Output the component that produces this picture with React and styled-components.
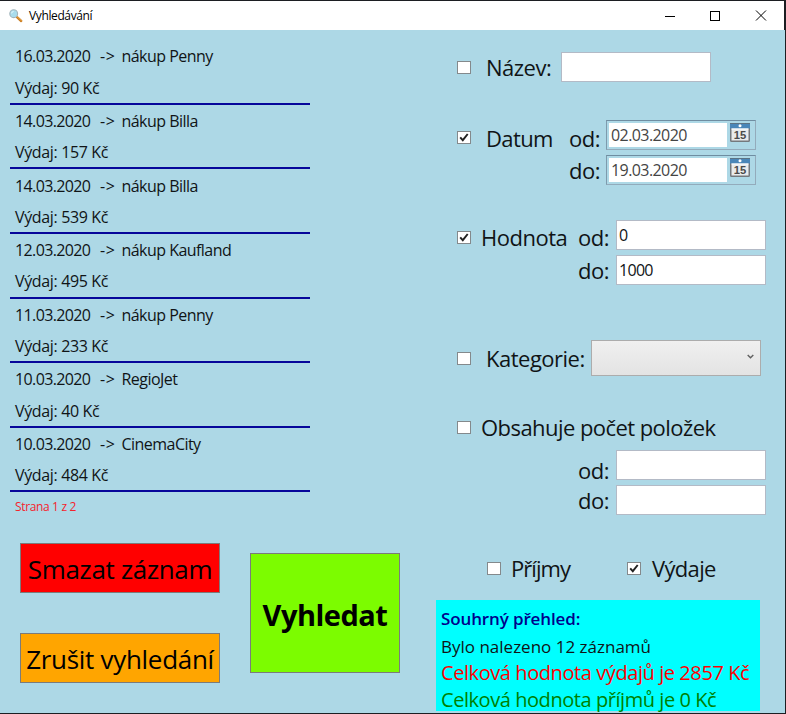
import React from "react";
import styled, { createGlobalStyle } from "styled-components";

const GlobalStyle = createGlobalStyle`
  *, *::before, *::after { box-sizing: border-box; }
  body {
    margin: 0;
    background: #1c1e22;
    font-family: "Open Sans", "Noto Sans", sans-serif;
    color: #101416;
  }
  button, input { font: inherit; color: inherit; border-radius: 0; }
`;

const Window = styled.div`
  width: 786px;
  height: 714px;
  padding: 1px 1px 1px 0;
  background: #1c1e22;
  overflow: hidden;
  display: flex;
  flex-direction: column;
`;

const TitleBar = styled.header`
  height: 29px;
  flex: none;
  width: 784px;
  background: #fff;
  display: flex;
  align-items: center;
  padding-left: 9px;
`;

const Title = styled.h1`
  margin: 0 auto 0 6px;
  font-size: 12px;
  font-weight: 400;
  line-height: 28px;
  letter-spacing: -0.38px;
  color: #000;
`;

const WindowButton = styled.button`
  width: ${(p) => p.$width || 46}px;
  height: 29px;
  padding: 0;
  border: 0;
  background: none;
  display: grid;
  place-items: center;
`;

const Content = styled.main`
  flex: 1;
  min-height: 0;
  background: #add8e6;
  display: flex;
`;

const LeftPane = styled.section`
  width: 436px;
  flex: none;
  padding: 10.3px 0 0 10px;
`;

const RecordList = styled.ul`
  list-style: none;
  margin: 0;
  padding: 0;
  width: 300px;
`;

const Record = styled.li`
  height: 64.6px;
  padding: 1.1px 0 0 5px;
  border-bottom: 2px solid #06069a;
  font-size: 16px;
  line-height: 31.2px;
  white-space: pre;
`;

const RecordTitle = styled.div`
  display: flex;
  letter-spacing: -0.54px;
`;

const RecordDate = styled.span`
  width: 85px;
  letter-spacing: -0.62px;
`;

const RecordArrow = styled.span`
  width: 21.5px;
  letter-spacing: 0.6px;
`;

const RecordAmount = styled.div`
  letter-spacing: -0.36px;
`;

const PageInfo = styled.p`
  margin: 5.2px 0 0 5px;
  font-size: 12px;
  line-height: 18px;
  letter-spacing: -0.35px;
  color: #f5222d;
`;

const Actions = styled.div`
  display: grid;
  grid-template-columns: 200px 150px;
  column-gap: 30px;
  margin: 27.3px 0 0 10px;
  align-items: center;
`;

const ActionStack = styled.div`
  display: grid;
  row-gap: 40px;
`;

const ActionButton = styled.button`
  height: ${(p) => p.$height || 50}px;
  padding: ${(p) => p.$nudge || 0}px 0 0;
  border: 1px solid #7b7b7b;
  background: ${(p) => p.$color};
  color: #000;
  font-size: ${(p) => p.$size || 26}px;
  font-weight: ${(p) => p.$weight || 400};
  letter-spacing: ${(p) => p.$tracking}px;
  white-space: nowrap;
`;

const RightPane = styled.section`
  flex: 1;
  padding-top: 22px;
`;

const Filters = styled.form`
  padding-left: 21px;
`;

const FilterRow = styled.div`
  display: flex;
  align-items: center;
  height: ${(p) => p.$height || 30}px;
  margin-top: ${(p) => p.$gap || 0}px;
  padding-left: ${(p) => p.$indent || 0}px;
`;

const CheckBox = styled.span`
  width: 14px;
  height: 13px;
  flex: none;
  margin-top: ${(p) => p.$drop || 1}px;
  margin-right: ${(p) => p.$space || 15}px;
  border: 1px solid #84898c;
  background: #fff;
  display: grid;
  place-items: center;
`;

const Caption = styled.label`
  flex: none;
  width: ${(p) => p.$width}px;
  padding-top: ${(p) => p.$drop || 0}px;
  font-size: 22px;
  line-height: 30px;
  letter-spacing: ${(p) => p.$tracking ?? -0.5}px;
  white-space: nowrap;
`;

const TextBox = styled.input`
  width: 150px;
  height: 30px;
  padding: 0 2px 0;
  border: 1px solid #b3bac6;
  background: #fff;
  font-size: 16px;
  letter-spacing: -0.7px;
  outline: 0;
`;

const DateBox = styled.div`
  width: 150px;
  height: 30px;
  border: 1px solid #93abbb;
  border-top-color: #6f8da1;
  border-left-color: #7e9aac;
  display: flex;
  padding: 2px 5px 2px 2px;
  justify-content: space-between;
`;

const DateValue = styled.span`
  width: 118px;
  height: 24px;
  padding-left: 2px;
  background: #fff;
  color: #444;
  font-size: 16px;
  line-height: 24px;
  letter-spacing: -0.58px;
`;

const Select = styled.div`
  width: 170px;
  height: 36px;
  padding: 0 6px 2px 0;
  border: 1px solid #acacac;
  background: linear-gradient(#f0f0f0, #e3e3e3);
  display: flex;
  align-items: center;
  justify-content: flex-end;
`;

const Summary = styled.div`
  width: 324px;
  height: 111px;
  margin-top: 17px;
  padding: 6px 0 0 5px;
  background: #00ffff;
  white-space: nowrap;
`;

const SummaryLine = styled.p`
  margin: 0;
  height: ${(p) => p.$height}px;
  line-height: ${(p) => p.$height}px;
  font-size: ${(p) => p.$size}px;
  font-weight: ${(p) => p.$weight || 400};
  letter-spacing: ${(p) => p.$tracking}px;
  color: ${(p) => p.$color};
`;

const records = [
  ["16.03.2020", "nákup Penny", 90],
  ["14.03.2020", "nákup Billa", 157],
  ["14.03.2020", "nákup Billa", 539],
  ["12.03.2020", "nákup Kaufland", 495],
  ["11.03.2020", "nákup Penny", 233],
  ["10.03.2020", "RegioJet", 40],
  ["10.03.2020", "CinemaCity", 484],
];

function SearchIcon() {
  return (
    <svg width="14" height="14" viewBox="0 0 14 14">
      <path d="M8 8.2 12.2 12" stroke="#c97b22" strokeWidth="2.4" strokeLinecap="round" />
      <path d="M8.4 8 12.4 11.6" stroke="#eeb04a" strokeWidth="0.9" strokeLinecap="round" />
      <circle cx="4.7" cy="4.7" r="3.9" fill="#a9dcec" stroke="#a3b4bb" strokeWidth="1.1" />
      <path d="M2.6 4.4a2.2 2.2 0 0 1 2-2" stroke="#e8f8fc" fill="none" />
    </svg>
  );
}

function Check({ checked, drop, space }) {
  return (
    <CheckBox $drop={drop} $space={space} role="checkbox" aria-checked={!!checked}>
      {checked && (
        <svg width="12" height="11" viewBox="0 0 12 11">
          <path d="M2.2 5.4 4.8 8.2 9.7 2" fill="none" stroke="#212121" strokeWidth="1.9" />
        </svg>
      )}
    </CheckBox>
  );
}

function CalendarIcon() {
  return (
    <svg width="20" height="19" viewBox="0 0 20 19">
      <rect x="0.75" y="0.5" width="18.5" height="17.75" rx="0.8" fill="#e9ebec" stroke="#74797d" strokeWidth="1.5" />
      <rect x="0" y="0" width="20" height="5.5" fill="#4a86b8" />
      <rect x="0" y="0" width="20" height="1" fill="#5b7384" />
      <rect x="1.5" y="5.5" width="17" height="1" fill="#fff" />
      <circle cx="10" cy="2.8" r="1.5" fill="#fff" />
      <text x="10" y="15.6" textAnchor="middle" fontFamily="Liberation Sans, sans-serif" fontWeight="700" fontSize="10.5" textLength="12.5" lengthAdjust="spacingAndGlyphs" fill="#4b4b4b">15</text>
    </svg>
  );
}

function DatePicker({ value }) {
  return (
    <DateBox>
      <DateValue>{value}</DateValue>
      <CalendarIcon />
    </DateBox>
  );
}

export default function App() {
  return (
    <>
      <GlobalStyle />
      <Window>
        <TitleBar>
          <SearchIcon />
          <Title>Vyhledávání</Title>
          <WindowButton $width={44} aria-label="Minimalizovat">
            <svg width="10" height="10"><path d="M0 5.5h10" stroke="#000" /></svg>
          </WindowButton>
          <WindowButton aria-label="Maximalizovat">
            <svg width="10" height="10"><rect x="0.5" y="0.5" width="9" height="9" fill="none" stroke="#000" /></svg>
          </WindowButton>
          <WindowButton aria-label="Zavřít">
            <svg width="12" height="11"><path d="M1 0.5l10 10M11 0.5l-10 10" stroke="#000" /></svg>
          </WindowButton>
        </TitleBar>
        <Content>
          <LeftPane>
            <RecordList>
              {records.map(([date, name, amount], i) => (
                <Record key={i}>
                  <RecordTitle>
                    <RecordDate>{date}</RecordDate>
                    <RecordArrow>{"->"}</RecordArrow>
                    <span>{name}</span>
                  </RecordTitle>
                  <RecordAmount>Výdaj: {amount} Kč</RecordAmount>
                </Record>
              ))}
            </RecordList>
            <PageInfo>Strana 1 z 2</PageInfo>
            <Actions>
              <ActionStack>
                <ActionButton $color="#ff0000" $tracking={-0.33} $nudge={2}>Smazat záznam</ActionButton>
                <ActionButton $color="#ffa500" $tracking={-0.3} $nudge={2}>Zrušit vyhledání</ActionButton>
              </ActionStack>
              <ActionButton $color="#7cfc00" $height={120} $size={29} $weight={700} $tracking={-0.5} $nudge={4}>
                Vyhledat
              </ActionButton>
            </Actions>
          </LeftPane>
          <RightPane>
            <Filters>
              <FilterRow>
                <Check />
                <Caption $width={75}>Název:</Caption>
                <TextBox />
              </FilterRow>
              <FilterRow $gap={38}>
                <Check checked drop={5} />
                <Caption $width={83} $drop={5} $tracking={-0.6}>Datum</Caption>
                <Caption $width={37} $drop={5}>od:</Caption>
                <DatePicker value="02.03.2020" />
              </FilterRow>
              <FilterRow $gap={5} $indent={112}>
                <Caption $width={37}>do:</Caption>
                <DatePicker value="19.03.2020" />
              </FilterRow>
              <FilterRow $gap={35}>
                <Check checked drop={5} space={10} />
                <Caption $width={97} $drop={4}>Hodnota</Caption>
                <Caption $width={38} $drop={4}>od:</Caption>
                <TextBox defaultValue="0" />
              </FilterRow>
              <FilterRow $gap={5} $indent={121}>
                <Caption $width={38}>do:</Caption>
                <TextBox defaultValue="1000" />
              </FilterRow>
              <FilterRow $gap={55} $height={36}>
                <Check />
                <Caption $width={105}>Kategorie:</Caption>
                <Select>
                  <svg width="7" height="6" viewBox="0 0 7 6">
                    <path d="M0.7 1 3.5 3.8 6.3 1" fill="none" stroke="#606060" strokeWidth="1.4" />
                  </svg>
                </Select>
              </FilterRow>
              <FilterRow $gap={36}>
                <Check space={10} />
                <Caption $width={240} $tracking={-0.556}>Obsahuje počet položek</Caption>
              </FilterRow>
              <FilterRow $gap={8} $indent={121}>
                <Caption $width={38} $drop={10}>od:</Caption>
                <TextBox />
              </FilterRow>
              <FilterRow $gap={5} $indent={121}>
                <Caption $width={38}>do:</Caption>
                <TextBox />
              </FilterRow>
              <FilterRow $gap={38} $indent={30}>
                <Check space={10} />
                <Caption $width={116} $tracking={-0.94}>Příjmy</Caption>
                <Check checked space={11} />
                <Caption $width={80} $tracking={-0.67}>Výdaje</Caption>
              </FilterRow>
            </Filters>
            <Summary>
              <SummaryLine $height={26} $size={17} $weight={600} $tracking={-0.13} $color="#00008b">
                Souhrný přehled:
              </SummaryLine>
              <SummaryLine $height={30} $size={17} $tracking={0} $color="#101416">
                Bylo nalezeno 12 záznamů
              </SummaryLine>
              <SummaryLine $height={22} $size={20} $tracking={-0.422} $color="#ff0000">
                Celková hodnota výdajů je 2857 Kč
              </SummaryLine>
              <SummaryLine $height={31} $size={20} $tracking={-0.442} $color="#008000">
                Celková hodnota příjmů je 0 Kč
              </SummaryLine>
            </Summary>
          </RightPane>
        </Content>
      </Window>
    </>
  );
}
